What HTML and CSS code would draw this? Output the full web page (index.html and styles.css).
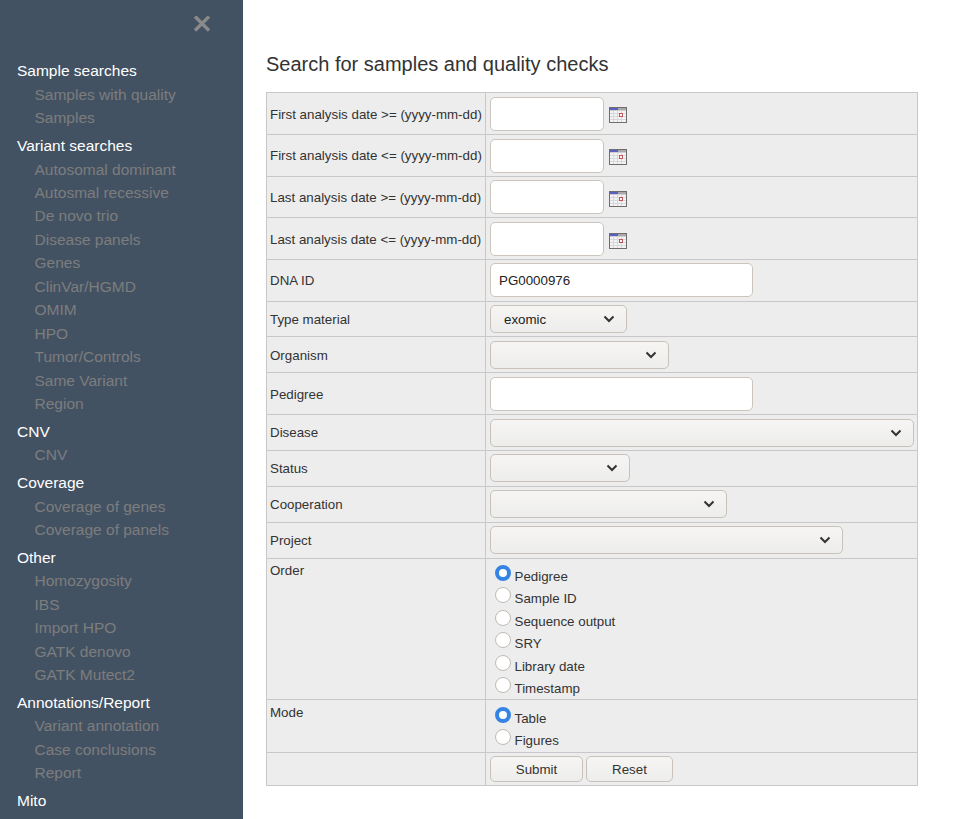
FILE: index.html
```html
<!DOCTYPE html>
<html lang="en">
<head>
  <meta charset="UTF-8" />
  <title>Search for samples and quality checks</title>
  <link rel="stylesheet" href="styles.css">
</head>
<body>

  <nav class="sidebar">
    <div class="close-row">
      <svg class="close-icon" width="18" height="16" viewBox="0 0 18 16"><path d="M2 0.5 L16 14.5 M16 0.5 L2 14.5" stroke="#8a8a8a" stroke-width="3.4" fill="none"/></svg>
    </div>
    <div class="menu">
      <div class="menu-group">
        <a class="menu-head">Sample searches</a>
        <a class="menu-item">Samples with quality</a>
        <a class="menu-item">Samples</a>
      </div>
      <div class="menu-group">
        <a class="menu-head">Variant searches</a>
        <a class="menu-item">Autosomal dominant</a>
        <a class="menu-item">Autosmal recessive</a>
        <a class="menu-item">De novo trio</a>
        <a class="menu-item">Disease panels</a>
        <a class="menu-item">Genes</a>
        <a class="menu-item">ClinVar/HGMD</a>
        <a class="menu-item">OMIM</a>
        <a class="menu-item">HPO</a>
        <a class="menu-item">Tumor/Controls</a>
        <a class="menu-item">Same Variant</a>
        <a class="menu-item">Region</a>
      </div>
      <div class="menu-group">
        <a class="menu-head">CNV</a>
        <a class="menu-item">CNV</a>
      </div>
      <div class="menu-group">
        <a class="menu-head">Coverage</a>
        <a class="menu-item">Coverage of genes</a>
        <a class="menu-item">Coverage of panels</a>
      </div>
      <div class="menu-group">
        <a class="menu-head">Other</a>
        <a class="menu-item">Homozygosity</a>
        <a class="menu-item">IBS</a>
        <a class="menu-item">Import HPO</a>
        <a class="menu-item">GATK denovo</a>
        <a class="menu-item">GATK Mutect2</a>
      </div>
      <div class="menu-group">
        <a class="menu-head">Annotations/Report</a>
        <a class="menu-item">Variant annotation</a>
        <a class="menu-item">Case conclusions</a>
        <a class="menu-item">Report</a>
      </div>
      <div class="menu-group">
        <a class="menu-head">Mito</a>
      </div>
    </div>
  </nav>

  <main class="content">
    <h1>Search for samples and quality checks</h1>

    <form>
      <table class="search-table">
        <tr class="row-input row-nudge">
          <td class="label-cell">First analysis date &gt;= (yyyy-mm-dd)</td>
          <td class="control-cell">
            <div class="date-field">
              <input type="text" class="text-input date-input">
              <svg class="cal-icon" width="18" height="16" viewBox="0 0 18 16"><rect x="0.5" y="0.5" width="17" height="15" fill="#f4f2f2" stroke="#6e6e6e"/><rect x="1" y="1" width="16" height="2.5" fill="#a9a9a9"/><rect x="1" y="1" width="8" height="2" fill="#5a5fc0"/><path d="M1 6.5H17M1 9.5H17M1 12.5H17M4.5 3.5V15M8.5 3.5V15M12.5 3.5V15" stroke="#d8d8dc" stroke-width="1"/><rect x="10.5" y="6.5" width="3" height="3" fill="#fff" stroke="#c0565a"/></svg>
            </div>
          </td>
        </tr>
        <tr class="row-input">
          <td class="label-cell">First analysis date &lt;= (yyyy-mm-dd)</td>
          <td class="control-cell">
            <div class="date-field">
              <input type="text" class="text-input date-input">
              <svg class="cal-icon" width="18" height="16" viewBox="0 0 18 16"><rect x="0.5" y="0.5" width="17" height="15" fill="#f4f2f2" stroke="#6e6e6e"/><rect x="1" y="1" width="16" height="2.5" fill="#a9a9a9"/><rect x="1" y="1" width="8" height="2" fill="#5a5fc0"/><path d="M1 6.5H17M1 9.5H17M1 12.5H17M4.5 3.5V15M8.5 3.5V15M12.5 3.5V15" stroke="#d8d8dc" stroke-width="1"/><rect x="10.5" y="6.5" width="3" height="3" fill="#fff" stroke="#c0565a"/></svg>
            </div>
          </td>
        </tr>
        <tr class="row-input row-nudge">
          <td class="label-cell">Last analysis date &gt;= (yyyy-mm-dd)</td>
          <td class="control-cell">
            <div class="date-field">
              <input type="text" class="text-input date-input">
              <svg class="cal-icon" width="18" height="16" viewBox="0 0 18 16"><rect x="0.5" y="0.5" width="17" height="15" fill="#f4f2f2" stroke="#6e6e6e"/><rect x="1" y="1" width="16" height="2.5" fill="#a9a9a9"/><rect x="1" y="1" width="8" height="2" fill="#5a5fc0"/><path d="M1 6.5H17M1 9.5H17M1 12.5H17M4.5 3.5V15M8.5 3.5V15M12.5 3.5V15" stroke="#d8d8dc" stroke-width="1"/><rect x="10.5" y="6.5" width="3" height="3" fill="#fff" stroke="#c0565a"/></svg>
            </div>
          </td>
        </tr>
        <tr class="row-input row-nudge">
          <td class="label-cell">Last analysis date &lt;= (yyyy-mm-dd)</td>
          <td class="control-cell">
            <div class="date-field">
              <input type="text" class="text-input date-input">
              <svg class="cal-icon" width="18" height="16" viewBox="0 0 18 16"><rect x="0.5" y="0.5" width="17" height="15" fill="#f4f2f2" stroke="#6e6e6e"/><rect x="1" y="1" width="16" height="2.5" fill="#a9a9a9"/><rect x="1" y="1" width="8" height="2" fill="#5a5fc0"/><path d="M1 6.5H17M1 9.5H17M1 12.5H17M4.5 3.5V15M8.5 3.5V15M12.5 3.5V15" stroke="#d8d8dc" stroke-width="1"/><rect x="10.5" y="6.5" width="3" height="3" fill="#fff" stroke="#c0565a"/></svg>
            </div>
          </td>
        </tr>
        <tr class="row-input">
          <td class="label-cell">DNA ID</td>
          <td class="control-cell flush"><input type="text" class="text-input wide-input raised" value="PG0000976"></td>
        </tr>
        <tr class="row-select row-first row-nudge">
          <td class="label-cell">Type material</td>
          <td class="control-cell">
            <div class="select-wrap w-137">
              <select><option>exomic</option></select>
              <svg class="chevron" width="12" height="8" viewBox="0 0 12 8"><path d="M1.5 1.5 L6 6 L10.5 1.5" stroke="#333" stroke-width="2" fill="none"/></svg>
            </div>
          </td>
        </tr>
        <tr class="row-select row-nudge">
          <td class="label-cell">Organism</td>
          <td class="control-cell">
            <div class="select-wrap w-179">
              <select><option></option></select>
              <svg class="chevron" width="12" height="8" viewBox="0 0 12 8"><path d="M1.5 1.5 L6 6 L10.5 1.5" stroke="#333" stroke-width="2" fill="none"/></svg>
            </div>
          </td>
        </tr>
        <tr class="row-input row-nudge">
          <td class="label-cell">Pedigree</td>
          <td class="control-cell"><input type="text" class="text-input wide-input"></td>
        </tr>
        <tr class="row-select">
          <td class="label-cell">Disease</td>
          <td class="control-cell">
            <div class="select-wrap w-424">
              <select><option></option></select>
              <svg class="chevron" width="12" height="8" viewBox="0 0 12 8"><path d="M1.5 1.5 L6 6 L10.5 1.5" stroke="#333" stroke-width="2" fill="none"/></svg>
            </div>
          </td>
        </tr>
        <tr class="row-select">
          <td class="label-cell">Status</td>
          <td class="control-cell flush">
            <div class="select-wrap w-140">
              <select><option></option></select>
              <svg class="chevron" width="12" height="8" viewBox="0 0 12 8"><path d="M1.5 1.5 L6 6 L10.5 1.5" stroke="#333" stroke-width="2" fill="none"/></svg>
            </div>
          </td>
        </tr>
        <tr class="row-select">
          <td class="label-cell">Cooperation</td>
          <td class="control-cell flush">
            <div class="select-wrap w-237">
              <select><option></option></select>
              <svg class="chevron" width="12" height="8" viewBox="0 0 12 8"><path d="M1.5 1.5 L6 6 L10.5 1.5" stroke="#333" stroke-width="2" fill="none"/></svg>
            </div>
          </td>
        </tr>
        <tr class="row-select">
          <td class="label-cell">Project</td>
          <td class="control-cell flush">
            <div class="select-wrap w-353">
              <select><option></option></select>
              <svg class="chevron" width="12" height="8" viewBox="0 0 12 8"><path d="M1.5 1.5 L6 6 L10.5 1.5" stroke="#333" stroke-width="2" fill="none"/></svg>
            </div>
          </td>
        </tr>
        <tr class="row-order">
          <td class="label-cell top-cell">Order</td>
          <td class="radio-cell">
            <label class="radio-line"><input type="radio" name="order" checked>Pedigree</label>
            <label class="radio-line"><input type="radio" name="order">Sample ID</label>
            <label class="radio-line"><input type="radio" name="order">Sequence output</label>
            <label class="radio-line"><input type="radio" name="order">SRY</label>
            <label class="radio-line"><input type="radio" name="order">Library date</label>
            <label class="radio-line"><input type="radio" name="order">Timestamp</label>
          </td>
        </tr>
        <tr class="row-mode">
          <td class="label-cell top-cell">Mode</td>
          <td class="radio-cell">
            <label class="radio-line"><input type="radio" name="mode" checked>Table</label>
            <label class="radio-line"><input type="radio" name="mode">Figures</label>
          </td>
        </tr>
        <tr class="row-buttons">
          <td class="label-cell"></td>
          <td class="control-cell">
            <div class="button-row">
              <button type="button" class="btn btn-submit">Submit</button>
              <button type="reset" class="btn btn-reset">Reset</button>
            </div>
          </td>
        </tr>
      </table>
    </form>
  </main>

</body>
</html>
```

FILE: styles.css
```css
html, body {
  height: 100%;
}

body {
  margin: 0;
  display: flex;
  height: 819px;
  overflow: hidden;
  background-color: #fff;
  color: #333;
  font-family: "Liberation Sans", Arial, sans-serif;
  font-size: 13.33px;
}

.sidebar {
  flex: 0 0 243px;
  height: 819px;
  overflow: hidden;
  background-color: #435263;
}

.close-row {
  display: flex;
  justify-content: flex-end;
  padding: 16px 32px 0 0;
  height: 43px;
}

.menu {
  padding: 0.4px 0 0 17px;
}

.menu-group {
  margin-bottom: 4.35px;
}

.menu a {
  display: block;
  font-size: 15.5px;
  line-height: 23.45px;
}

.menu-head {
  color: #fff;
}

.menu-item {
  padding-left: 17.5px;
  color: #7d7d7d;
}

.content {
  flex: 1;
  padding: 0 0 0 23px;
}

h1 {
  margin: 52px 0 16px;
  font-size: 20px;
  font-weight: normal;
  line-height: 24px;
  color: #333;
}

.search-table {
  width: 652px;
  border-collapse: collapse;
  table-layout: fixed;
  background-color: #ededed;
}

.search-table td {
  border: 1px solid #c8c8c8;
  padding: 0 3px 0 4px;
  vertical-align: middle;
}

.search-table .label-cell {
  width: 212px;
  padding-left: 3px;
  white-space: nowrap;
}

.search-table .row-nudge .label-cell {
  padding-top: 1.5px;
}

.search-table .top-cell {
  vertical-align: top;
  padding-top: 4px;
}

.search-table .row-mode .top-cell {
  padding-top: 5px;
}

.search-table .control-cell {
  padding-top: 1px;
}

.search-table .flush {
  padding-top: 0;
}

.row-input {
  height: 41.8px;
}

.row-select {
  height: 36px;
}

.row-first {
  height: 35px;
}

.row-order {
  height: 141px;
}

.row-mode {
  height: 53px;
}

.row-buttons {
  height: 33px;
}

.text-input {
  box-sizing: border-box;
  display: block;
  height: 34px;
  padding: 0 8px;
  border: 1px solid #ccc5bd;
  border-radius: 5px;
  background-color: #fff;
  color: #222;
  font-family: inherit;
  font-size: 13.33px;
}

.date-input {
  width: 114px;
}

.wide-input {
  width: 263px;
}

.raised {
  margin-bottom: 1px;
}

.date-field {
  display: flex;
  align-items: center;
  gap: 5px;
}

.cal-icon {
  margin-top: 3px;
}

.select-wrap {
  position: relative;
  height: 28px;
}

.select-wrap select {
  box-sizing: border-box;
  display: block;
  width: 100%;
  height: 100%;
  padding: 0 13px;
  appearance: none;
  border: 1px solid #c8c2bb;
  border-radius: 5px;
  background: linear-gradient(#f6f5f4, #ededeb);
  color: #222;
  font-family: inherit;
  font-size: 13.33px;
}

.chevron {
  position: absolute;
  right: 12px;
  top: 10px;
}

.w-137 { width: 137px; }
.w-140 { width: 140px; }
.w-179 { width: 179px; }
.w-237 { width: 237px; }
.w-353 { width: 353px; }
.w-424 { width: 424px; }

.search-table .radio-cell {
  padding-top: 10px;
  vertical-align: top;
}

.search-table .row-mode .radio-cell {
  padding-top: 11px;
}

.radio-line {
  display: flex;
  align-items: flex-start;
  height: 22.45px;
  gap: 3.5px;
  line-height: 16px;
  color: #333;
}

.radio-line:last-child {
  height: 16px;
}

.radio-line input {
  box-sizing: border-box;
  appearance: none;
  flex: 0 0 16px;
  width: 16px;
  height: 16px;
  margin: 0 0 0 5px;
  border: 1px solid #c0bab3;
  border-radius: 50%;
  background-color: #fff;
  position: relative;
  top: -4px;
}

.radio-line input:checked {
  border: 4px solid #3584e4;
}

.button-row {
  display: flex;
  gap: 3px;
}

.btn {
  box-sizing: border-box;
  height: 26px;
  padding: 0;
  border: 1px solid #c8c2bb;
  border-radius: 5px;
  background: linear-gradient(#f6f5f4, #ededeb);
  color: #333;
  font-family: inherit;
  font-size: 13.33px;
}

.btn-submit {
  width: 93px;
}

.btn-reset {
  width: 87px;
}
```
